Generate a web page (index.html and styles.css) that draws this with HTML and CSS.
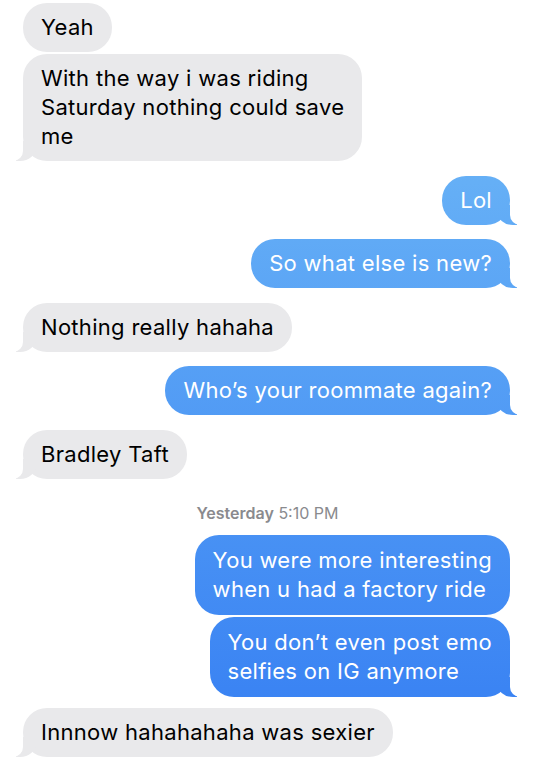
FILE: index.html
```html
<!DOCTYPE html>
<html lang="en">
<head>
<meta charset="utf-8">
<title>Messages</title>
<link rel="stylesheet" href="styles.css">
</head>
<body>
<main class="thread">
  <div class="msg in">Yeah</div>
  <div class="msg in tail">With the way i was riding<br>Saturday nothing could save<br>me</div>
  <div class="msg out tail gap">Lol</div>
  <div class="msg out tail gap">So what else is new?</div>
  <div class="msg in tail gap">Nothing really hahaha</div>
  <div class="msg out tail gap">Who’s your roommate again?</div>
  <div class="msg in tail gap">Bradley Taft</div>
  <div class="stamp"><b>Yesterday</b> 5:10 PM</div>
  <div class="msg out tall">You were more interesting<br>when u had a factory ride</div>
  <div class="msg out tail tall">You don’t even post emo<br>selfies on IG anymore</div>
  <div class="msg in tail gap-sm">Innnow hahahahaha was sexier</div>
</main>
</body>
</html>
```
FILE: styles.css
```css
html, body {
  margin: 0;
  padding: 0;
  background: #ffffff;
}

body {
  font-family: "Inter", "Liberation Sans", sans-serif;
  font-size: 22px;
  line-height: 29px;
  color: #000000;
  width: 533px;
  height: 768px;
  overflow: hidden;
}

.thread {
  display: flex;
  flex-direction: column;
  gap: 2px;
  padding: 3px 23px 0 23px;
}

.msg {
  position: relative;
  padding: 10px 18px;
  border-radius: 24px;
  box-sizing: border-box;
  letter-spacing: 0.3px;
  white-space: nowrap;
}

.msg.tall {
  padding: 11px 18px;
}

.msg.gap {
  margin-top: 12.5px;
}

.msg.gap-sm {
  margin-top: 9px;
}

.in {
  align-self: flex-start;
  background: #e9e9eb;
  color: #000000;
}

.out {
  align-self: flex-end;
  color: #ffffff;
  background: linear-gradient(to bottom, #66b0f6 0px, #66b0f6 170px, #3a83f3 700px, #3a83f3 768px) fixed;
}

.tail::before,
.tail::after {
  content: "";
  position: absolute;
  bottom: 0;
  height: 20px;
}

.in.tail::before {
  left: -7px;
  width: 20px;
  background: #e9e9eb;
  border-bottom-right-radius: 16px 14px;
  z-index: 0;
}

.in.tail::after {
  left: -10px;
  width: 10px;
  background: #ffffff;
  border-bottom-right-radius: 10px;
  z-index: 1;
}

.out.tail::before {
  right: -7px;
  width: 20px;
  background: linear-gradient(to bottom, #66b0f6 0px, #66b0f6 170px, #3a83f3 700px, #3a83f3 768px) fixed;
  border-bottom-left-radius: 16px 14px;
  z-index: 0;
}

.out.tail::after {
  right: -10px;
  width: 10px;
  background: #ffffff;
  border-bottom-left-radius: 10px;
  z-index: 1;
}

.stamp {
  align-self: center;
  margin: 22px 0 10px;
  font-size: 16px;
  line-height: 20px;
  color: #8a8a8e;
  padding-left: 2px;
}

.stamp b {
  font-weight: 600;
}
```
